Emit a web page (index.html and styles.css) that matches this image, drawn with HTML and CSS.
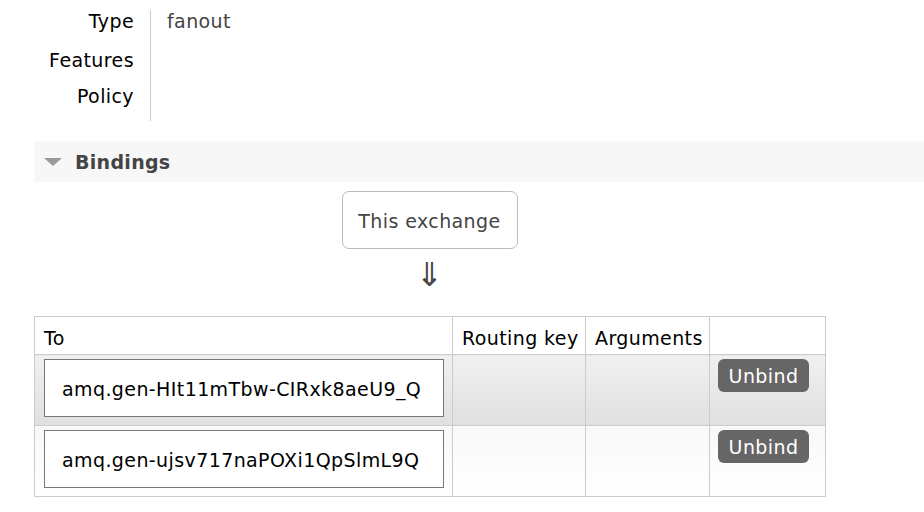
FILE: index.html
```html
<!DOCTYPE html>
<html>
<head>
<meta charset="utf-8">
<link rel="stylesheet" href="styles.css">
</head>
<body>
<div class="facts">
  <div class="labels">
    <div class="r1">Type</div>
    <div class="r2">Features</div>
    <div class="r3">Policy</div>
  </div>
  <div class="values">
    <div class="r1 val">fanout</div>
    <div class="r2"></div>
    <div class="r3"></div>
  </div>
</div>

<div class="section-head">
  <span class="tri"></span>
  <span class="title">Bindings</span>
</div>

<div class="bindings">
  <div class="diagram">
    <div class="exchange">This exchange</div>
    <div class="arrow">&#8659;</div>
  </div>
  <table class="list">
    <colgroup>
      <col class="c1"><col class="c2"><col class="c3"><col class="c4">
    </colgroup>
    <thead>
      <tr><th>To</th><th>Routing key</th><th>Arguments</th><th></th></tr>
    </thead>
    <tbody>
      <tr class="alt1">
        <td><div class="dest">amq.gen-HIt11mTbw-CIRxk8aeU9_Q</div></td>
        <td></td><td></td>
        <td><button class="btn">Unbind</button></td>
      </tr>
      <tr class="alt2">
        <td><div class="dest">amq.gen-ujsv717naPOXi1QpSlmL9Q</div></td>
        <td></td><td></td>
        <td><button class="btn">Unbind</button></td>
      </tr>
    </tbody>
  </table>
</div>
</body>
</html>
```

FILE: styles.css
```css
html, body {
  margin: 0;
  padding: 0;
  background: #fff;
}
body {
  font-family: "DejaVu Sans", Verdana, sans-serif;
  font-size: 19px;
  line-height: 22px;
  letter-spacing: 0.4px;
  color: #000;
}
.facts {
  display: flex;
  padding-top: 10px;
}
.labels {
  width: 134px;
  text-align: right;
  padding-right: 16px;
}
.values {
  border-left: 1px solid #ccc;
  padding-left: 16px;
  width: 200px;
}
.r1 { height: 39px; }
.r2 { height: 36px; }
.r3 { height: 36px; }
.val { color: #444; }

.section-head {
  margin: 20px 0 0 34px;
  height: 41px;
  background: #f7f7f7;
  display: flex;
  align-items: center;
}
.tri {
  width: 0;
  height: 0;
  margin-left: 10px;
  border-left: 9px solid transparent;
  border-right: 9px solid transparent;
  border-top: 8px solid #999;
  margin-right: 13px;
}
.title {
  font-weight: bold;
  font-size: 19px;
  letter-spacing: 0.3px;
  color: #444;
}

.bindings {
  margin-left: 34px;
  width: 791px;
  padding-top: 9px;
}
.diagram {
  display: flex;
  flex-direction: column;
  align-items: center;
}
.exchange {
  width: 176px;
  height: 58px;
  box-sizing: border-box;
  border: 1px solid #bbb;
  border-radius: 7px;
  display: flex;
  align-items: center;
  justify-content: center;
  color: #444;
  padding-top: 2px;
}
.arrow {
  margin-top: 9px;
  height: 58px;
  font-size: 33px;
  line-height: 34px;
  color: #444;
  letter-spacing: 0;
}
table.list {
  border-collapse: collapse;
  table-layout: fixed;
  width: 791px;
}
.c1 { width: 418px; }
.c2 { width: 133px; }
.c3 { width: 124px; }
.c4 { width: 116px; }
.list th, .list td {
  border: 1px solid #ccc;
  text-align: left;
  vertical-align: top;
  padding: 0 9px;
}
.list th {
  font-weight: normal;
  white-space: nowrap;
  padding-right: 0;
  height: 38px;
  padding-top: 10px;
  padding-bottom: 0;
  box-sizing: border-box;
}
.list td {
  padding-top: 4px;
  padding-bottom: 8px;
}
.list td:last-child { padding-left: 8px; }
tr.alt1 td { background: linear-gradient(#f0f0f0, #e0e0e0); }
tr.alt2 td { background: linear-gradient(#f8f8f8, #ffffff); }
.dest {
  width: 400px;
  height: 58px;
  box-sizing: border-box;
  border: 1px solid #777;
  background: #fff;
  padding-left: 17px;
  padding-top: 1px;
  display: flex;
  align-items: center;
  white-space: nowrap;
}
.btn {
  font-family: inherit;
  font-size: 19px;
  letter-spacing: 0.4px;
  line-height: 22px;
  color: #fff;
  background: #666;
  border: none;
  border-radius: 6px;
  width: 91px;
  height: 33px;
  padding: 0;
}
```
